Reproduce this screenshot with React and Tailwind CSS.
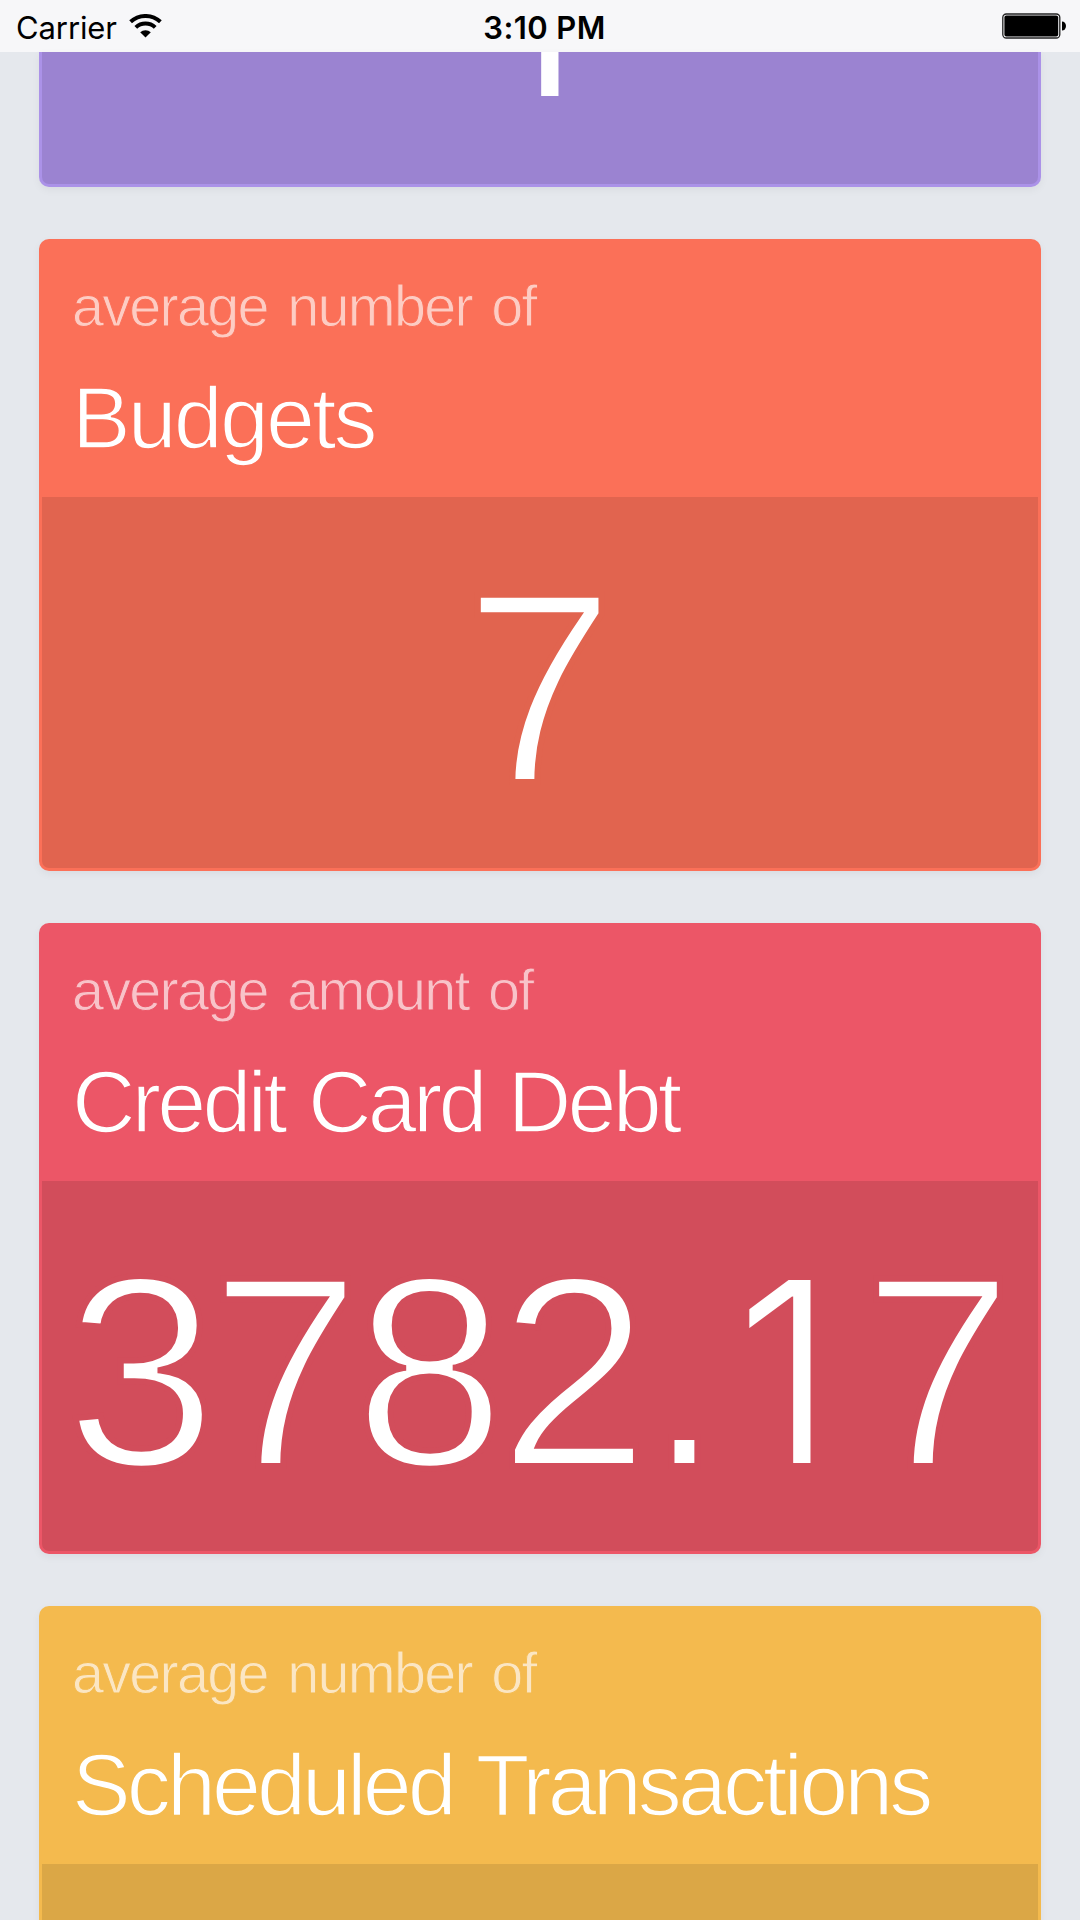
const cards = [
  {
    label: 'average number of',
    title: 'Budgets',
    value: '7',
    bg: 'bg-[#fb7058]',
    labelStyle: 'text-[#fdccc3] [-webkit-text-stroke:0.9px_#fb7058]',
    titleStyle: '[-webkit-text-stroke:1.7px_#fb7058] tracking-[-2.9px]',
    valueStyle: '[-webkit-text-stroke:6px_#e1644f]',
    panel: 'bg-[#e1644f]',
  },
  {
    label: 'average amount of',
    title: 'Credit Card Debt',
    value: '3782.17',
    bg: 'bg-[#ec5667]',
    labelStyle: 'text-[#f8c3c9] [-webkit-text-stroke:0.9px_#ec5667]',
    titleStyle: '[-webkit-text-stroke:1.7px_#ec5667] tracking-[-3.8px] [word-spacing:3.5px]',
    valueStyle: '[-webkit-text-stroke:6px_#d24d5b]',
    panel: 'bg-[#d24d5b]',
  },
  {
    label: 'average number of',
    title: 'Scheduled Transactions',
    value: '',
    bg: 'bg-[#f4ba4e]',
    labelStyle: 'text-[#fbe6c3] [-webkit-text-stroke:0.9px_#f4ba4e]',
    titleStyle: '[-webkit-text-stroke:1.7px_#f4ba4e] tracking-[-3.9px] [word-spacing:4px]',
    valueStyle: '',
    panel: 'bg-[#dba746]',
  },
];

function Value({ value, className }) {
  return (
    <span className={`flex text-[272px] leading-[300px] tracking-[-7px] text-white ${className}`}>
      {value.split('').map((char, idx) =>
        char === '1' ? (
          <span
            key={idx}
            className="w-[147px] pr-[7px] text-center font-['Inter',sans-serif] text-[252px] font-light tracking-normal [-webkit-text-stroke:0]"
          >
            1
          </span>
        ) : (
          <span key={idx} className={char === '.' ? 'ml-[4px]' : ''}>
            {char}
          </span>
        )
      )}
    </span>
  );
}

function StatusBar() {
  return (
    <header className="flex h-[52px] shrink-0 items-center justify-between bg-[#f7f7f9] pl-[16px] pr-[14px] font-['Inter',sans-serif] text-[31px] leading-[52px] text-black">
      <div className="flex flex-1 items-center gap-[12px]">
        <span className="pt-[3px] tracking-[-0.1px]">Carrier</span>
        <svg width="33" height="24" viewBox="0 0 33 24" fill="none" stroke="#000">
          <path d="M1.6 7.8 A22 22 0 0 1 31.4 7.8" strokeWidth="4" />
          <path d="M6.8 13.4 A14.2 14.2 0 0 1 26.2 13.4" strokeWidth="4" />
          <path d="M16.5 23.6 L11.2 18.3 A7.6 7.6 0 0 1 21.8 18.3 Z" fill="#000" stroke="none" />
        </svg>
      </div>
      <span className="pl-[7px] pt-[3px] font-semibold tracking-[0.4px]">3:10 PM</span>
      <div className="flex flex-1 items-center justify-end">
        <svg width="64" height="26" viewBox="0 0 64 26">
          <rect x="0.8" y="1" width="57" height="24" rx="3.5" fill="none" stroke="#222" strokeWidth="1.3" />
          <rect x="2.4" y="2.6" width="53.8" height="20.8" rx="2" fill="#000" />
          <path d="M60 8.5 A4 4.5 0 0 1 60 17.5 Z" fill="#000" />
        </svg>
      </div>
    </header>
  );
}

function Card({ card }) {
  return (
    <section className={`flex h-[631.5px] shrink-0 flex-col rounded-[10px] p-[3px] shadow-[0_3px_8px_rgba(0,0,0,0.05)] ${card.bg}`}>
      <div className="flex h-[255px] shrink-0 flex-col px-[30px] pt-[28px] whitespace-nowrap">
        <p className={`text-[57.5px] leading-[72px] tracking-[-1.7px] [word-spacing:5px] ${card.labelStyle}`}>
          {card.label}
        </p>
        <h2 className={`mt-[26px] text-[88px] leading-[100px] text-white ${card.titleStyle}`}>{card.title}</h2>
      </div>
      <div className={`flex flex-1 items-center justify-center rounded-b-[7px] pr-[8px] pt-[12px] ${card.panel}`}>
        <Value value={card.value} className={card.valueStyle} />
      </div>
    </section>
  );
}

export default function App() {
  return (
    <div className="flex h-[1920px] w-[1080px] flex-col overflow-hidden bg-[#e5e8ed] font-['Liberation_Sans',Arial,sans-serif]">
      <StatusBar />
      <main className="flex flex-col gap-[52px] px-[39px]">
        {/* card scrolled half way under the status bar */}
        <section className="flex h-[135px] shrink-0 flex-col rounded-b-[10px] bg-[#ab92e8] px-[3px] pb-[3px] shadow-[0_3px_8px_rgba(0,0,0,0.05)]">
          <div className="flex flex-1 items-end justify-center overflow-hidden rounded-b-[7px] bg-[#9b83d1] pr-[7px] pb-[29px]">
            <Value value="1" className="" />
          </div>
        </section>
        {cards.map((card) => (
          <Card key={card.title} card={card} />
        ))}
      </main>
    </div>
  );
}
